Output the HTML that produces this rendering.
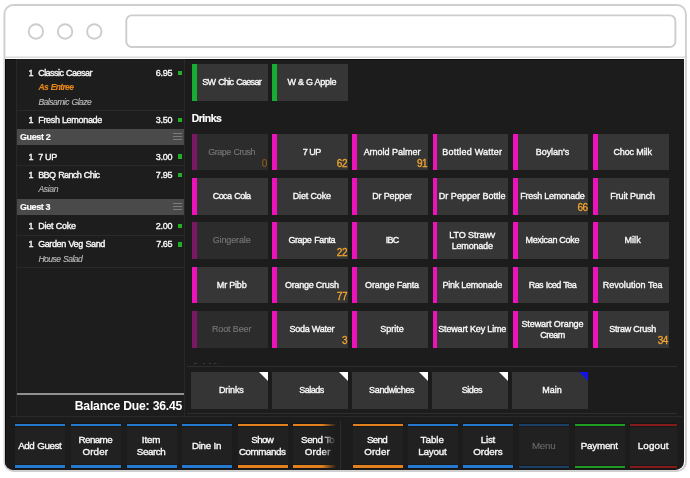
<!DOCTYPE html><html lang="en"><head><meta charset="utf-8"><title>POS Order Screen</title><style>
html,body{margin:0;padding:0;}
body{width:690px;height:478px;background:#fff;position:relative;overflow:hidden;font-family:"Liberation Sans",sans-serif;}
.abs,.abs *{position:absolute;box-sizing:border-box;}
#app{left:5.1px;top:58.5px;width:679.1px;height:411.9px;background:#1c1c1c;border-radius:0 0 8.5px 8.5px;overflow:hidden;color:#fff;}
#in{left:-5.1px;top:-58.5px;width:690px;height:478px;will-change:transform;}
.t{white-space:nowrap;line-height:12px;height:12px;font-size:9px;color:#f8f8f8;-webkit-text-stroke:0.36px #f8f8f8;}
.c{text-align:center;}
.r{text-align:right;}
#order{left:16px;top:59px;width:168.5px;height:357.5px;background:#1d1d1d;border:1px solid #282828;border-top:none;}
.sep{left:17px;width:166.5px;height:1px;background:#292929;}
.gh{left:16.5px;width:167.5px;height:16.2px;background:#4a4a4a;}
.gh b{left:3.4px;top:2.2px;font-size:9px;line-height:12px;white-space:nowrap;color:#fff;-webkit-text-stroke:0.15px #fff;}
.gh i{left:156.6px;width:9px;height:1.2px;background:#7c7c7c;}
.sq{width:4.6px;height:4.6px;background:#22b022;left:177.7px;}
.mod{font-style:italic;color:#b8b8b8;font-size:8.6px;-webkit-text-stroke:0.15px #b8b8b8;}
.btn{background:#363636;width:75.7px;height:36.5px;}
.btn.dis{background:#2c2c2c;}
.btn u{left:0;top:0;width:4.9px;height:100%;background:#ee12bb;text-decoration:none;}
.btn.dis u{background:#7a1866;}
.btn.g u{background:#18ac34;}
.btn .lb{left:3.2px;width:72.9px;text-align:center;font-size:9px;line-height:11px;color:#f8f8f8;white-space:nowrap;-webkit-text-stroke:0.36px #f8f8f8;}
.btn.dis .lb{color:#757575;-webkit-text-stroke:0.15px #757575;}
.btn .n{right:0.9px;bottom:1.4px;font-size:10px;line-height:10px;color:#f2a52e;letter-spacing:-0.5px;-webkit-text-stroke:0.3px #f2a52e;}
.btn.dis .n{color:#8a5a18;-webkit-text-stroke:0.2px #8a5a18;}
.cat{background:#353535;width:76.4px;height:36.9px;top:371.7px;overflow:hidden;}
.cat .lb{left:1.8px;width:100%;text-align:center;top:12.6px;font-size:9px;line-height:12px;color:#f8f8f8;white-space:nowrap;-webkit-text-stroke:0.36px #f8f8f8;}
.cat s{right:0;top:0;width:0;height:0;border-left:9px solid transparent;border-top:9px solid #fff;text-decoration:none;}
.cat.bl s{border-top-color:#1414e0;}
.bb{top:424px;height:44px;width:50px;background:#212121;color:#2579cf;}
.bb p{margin:0;left:0;width:100%;height:2.5px;background:currentColor;box-shadow:0 0 1.5px #000;}
.bb p.t1{top:0;height:2.4px;}
.bb p.t2{bottom:0;height:2.7px;}
.bb .lb{left:-0.5px;width:100%;text-align:center;font-size:9.8px;line-height:11.3px;color:#f8f8f8;white-space:nowrap;-webkit-text-stroke:0.36px #f8f8f8;}
.bb.o{color:#e2801e;}
.bb.gr{color:#1f9c22;}
.bb.rd{color:#841b1b;}
.bb.dk{color:#1b3f66;}
.bb.thin p.t1,.bb.thin p.t2{height:1.8px;}
.bb.gr p.t1,.bb.gr p.t2{height:2.3px;}
.bb.dk .lb{color:#6a6a6a;-webkit-text-stroke:0.1px #6a6a6a;}
</style></head><body>
<svg class="abs" style="position:absolute;left:0;top:0" width="690" height="478" viewBox="0 0 690 478"><rect x="4.4" y="5" width="681.5" height="466" rx="9" ry="9" fill="#fff" stroke="#cfcfcf" stroke-width="1.9"/><line x1="5" y1="57.2" x2="685" y2="57.2" stroke="#dadada" stroke-width="1.6"/><circle cx="35.9" cy="31.5" r="7.2" fill="#fff" stroke="#cdcdcd" stroke-width="1.9"/><circle cx="65.1" cy="31.5" r="7.2" fill="#fff" stroke="#cdcdcd" stroke-width="1.9"/><circle cx="94.3" cy="31.5" r="7.2" fill="#fff" stroke="#cdcdcd" stroke-width="1.9"/><rect x="126.3" y="15.4" width="549.1" height="31.6" rx="5.5" ry="5.5" fill="#fff" stroke="#cdcdcd" stroke-width="1.9"/></svg>
<div class="abs" style="position:absolute;left:0;top:0;width:690px;height:478px">
<div id="app"><div id="in">
<div style="left:5px;top:58px;width:11px;height:420px;background:#1a1a1a"></div>
<div style="left:5px;top:58px;width:1.3px;height:420px;background:#080808"></div>
<div style="left:5px;top:58.5px;width:680px;height:1.5px;background:#101010"></div>
<div id="order"></div>
<div class="t c" style="left:26px;width:10px;top:66.9px">1</div>
<div class="t" style="left:38.2px;top:66.9px;letter-spacing:-0.55px;word-spacing:0.83px">Classic Caesar</div>
<div class="t r" style="left:130px;width:42.4px;top:66.9px;letter-spacing:-0.28px;margin-left:-0.28px">6.95</div>
<div class="sq" style="top:70.6px"></div>
<div class="t mod" style="left:38.4px;top:81.0px;letter-spacing:-0.64px;word-spacing:0.97px;font-size:8.5px;color:#e8871a;font-weight:bold;-webkit-text-stroke:0.1px #e8871a;">As Entree</div>
<div class="t mod" style="left:38.4px;top:96.0px;letter-spacing:-0.54px;word-spacing:0.81px;">Balsamic Glaze</div>
<div class="sep" style="top:109.5px"></div>
<div class="t c" style="left:26px;width:10px;top:114.0px">1</div>
<div class="t" style="left:38.2px;top:114.0px;letter-spacing:-0.30px">Fresh Lemonade</div>
<div class="t r" style="left:130px;width:42.4px;top:114.0px;letter-spacing:-0.28px;margin-left:-0.28px">3.50</div>
<div class="sq" style="top:117.7px"></div>
<div class="gh" style="top:128.9px"><b style="letter-spacing:-0.34px">Guest 2</b><i style="top:4.1px"></i><i style="top:7.2px"></i><i style="top:10.3px"></i></div>
<div class="t c" style="left:26px;width:10px;top:150.7px">1</div>
<div class="t" style="left:38.2px;top:150.7px;letter-spacing:-0.34px">7 UP</div>
<div class="t r" style="left:130px;width:42.4px;top:150.7px;letter-spacing:-0.28px;margin-left:-0.28px">3.00</div>
<div class="sq" style="top:154.4px"></div>
<div class="sep" style="top:165.2px"></div>
<div class="t c" style="left:26px;width:10px;top:168.8px">1</div>
<div class="t" style="left:38.2px;top:168.8px;letter-spacing:-0.62px;word-spacing:0.93px">BBQ Ranch Chic</div>
<div class="t r" style="left:130px;width:42.4px;top:168.8px;letter-spacing:-0.28px;margin-left:-0.28px">7.95</div>
<div class="sq" style="top:172.5px"></div>
<div class="t mod" style="left:38.4px;top:183.4px;letter-spacing:-0.35px;">Asian</div>
<div class="gh" style="top:198.9px"><b style="letter-spacing:-0.42px">Guest 3</b><i style="top:4.1px"></i><i style="top:7.2px"></i><i style="top:10.3px"></i></div>
<div class="t c" style="left:26px;width:10px;top:220.0px">1</div>
<div class="t" style="left:38.2px;top:220.0px;letter-spacing:-0.21px">Diet Coke</div>
<div class="t r" style="left:130px;width:42.4px;top:220.0px;letter-spacing:-0.28px;margin-left:-0.28px">2.00</div>
<div class="sq" style="top:223.7px"></div>
<div class="sep" style="top:234.5px"></div>
<div class="t c" style="left:26px;width:10px;top:238.4px">1</div>
<div class="t" style="left:38.2px;top:238.4px;letter-spacing:-0.41px;word-spacing:0.62px">Garden Veg Sand</div>
<div class="t r" style="left:130px;width:42.4px;top:238.4px;letter-spacing:-0.44px;margin-left:-0.44px">7.65</div>
<div class="sq" style="top:242.1px"></div>
<div class="t mod" style="left:38.4px;top:253.0px;letter-spacing:-0.57px;word-spacing:0.85px;">House Salad</div>
<div class="sep" style="top:266.5px"></div>
<div style="left:16.5px;top:392.8px;width:167.5px;height:1.9px;background:#909090"></div>
<div class="r" style="left:40px;width:142.3px;top:398.8px;font-size:12.2px;line-height:15px;font-weight:bold;letter-spacing:-0.21px;margin-left:-0.21px;color:#fff;white-space:nowrap">Balance Due: 36.45</div>
<div class="btn g" style="left:192.0px;top:64.4px"><u></u><div class="lb" style="top:12.9px"><span style="position:static;display:block;letter-spacing:-0.71px;word-spacing:1.07px">SW Chic Caesar</span></div></div>
<div class="btn g" style="left:272.2px;top:64.4px"><u></u><div class="lb" style="top:12.9px"><span style="position:static;display:block;letter-spacing:-0.26px">W &amp; G Apple</span></div></div>
<div style="left:191.7px;top:110.6px;font-size:10.4px;line-height:15px;font-weight:bold;letter-spacing:-0.43px;color:#fff;white-space:nowrap;-webkit-text-stroke:0.2px #fff">Drinks</div>
<div class="btn dis" style="left:192.0px;top:133.8px"><u></u><div class="lb" style="top:12.9px"><span style="position:static;display:block;letter-spacing:-0.51px;word-spacing:0.76px">Grape Crush</span></div><div class="n">0</div></div>
<div class="btn " style="left:272.2px;top:133.8px"><u></u><div class="lb" style="top:12.9px"><span style="position:static;display:block;letter-spacing:-0.51px">7 UP</span></div><div class="n">62</div></div>
<div class="btn " style="left:352.4px;top:133.8px"><u></u><div class="lb" style="top:12.9px"><span style="position:static;display:block;letter-spacing:-0.02px">Arnold Palmer</span></div><div class="n">91</div></div>
<div class="btn " style="left:432.6px;top:133.8px"><u></u><div class="lb" style="top:12.9px"><span style="position:static;display:block;letter-spacing:0.23px">Bottled Watter</span></div></div>
<div class="btn " style="left:512.8px;top:133.8px"><u></u><div class="lb" style="top:12.9px"><span style="position:static;display:block;letter-spacing:-0.05px">Boylan's</span></div></div>
<div class="btn " style="left:593.0px;top:133.8px"><u></u><div class="lb" style="top:12.9px"><span style="position:static;display:block;letter-spacing:-0.14px">Choc Milk</span></div></div>
<div class="btn " style="left:192.0px;top:178.1px"><u></u><div class="lb" style="top:12.9px"><span style="position:static;display:block;letter-spacing:-0.56px;word-spacing:0.84px">Coca Cola</span></div></div>
<div class="btn " style="left:272.2px;top:178.1px"><u></u><div class="lb" style="top:12.9px"><span style="position:static;display:block;letter-spacing:-0.14px">Diet Coke</span></div></div>
<div class="btn " style="left:352.4px;top:178.1px"><u></u><div class="lb" style="top:12.9px"><span style="position:static;display:block;letter-spacing:-0.15px">Dr Pepper</span></div></div>
<div class="btn " style="left:432.6px;top:178.1px"><u></u><div class="lb" style="top:12.9px"><span style="position:static;display:block;letter-spacing:0.02px">Dr Pepper Bottle</span></div></div>
<div class="btn " style="left:512.8px;top:178.1px"><u></u><div class="lb" style="top:12.9px"><span style="position:static;display:block;letter-spacing:-0.27px">Fresh Lemonade</span></div><div class="n">66</div></div>
<div class="btn " style="left:593.0px;top:178.1px"><u></u><div class="lb" style="top:12.9px"><span style="position:static;display:block;letter-spacing:-0.13px">Fruit Punch</span></div></div>
<div class="btn dis" style="left:192.0px;top:222.4px"><u></u><div class="lb" style="top:12.9px"><span style="position:static;display:block;letter-spacing:-0.13px">Gingerale</span></div></div>
<div class="btn " style="left:272.2px;top:222.4px"><u></u><div class="lb" style="top:12.9px"><span style="position:static;display:block;letter-spacing:-0.39px;word-spacing:0.59px">Grape Fanta</span></div><div class="n">22</div></div>
<div class="btn " style="left:352.4px;top:222.4px"><u></u><div class="lb" style="top:12.9px"><span style="position:static;display:block;letter-spacing:-0.75px">IBC</span></div></div>
<div class="btn " style="left:432.6px;top:222.4px"><u></u><div class="lb" style="top:7.5px"><span style="position:static;display:block;letter-spacing:-0.05px">LTO Strawv</span><span style="position:static;display:block;letter-spacing:-0.19px">Lemonade</span></div></div>
<div class="btn " style="left:512.8px;top:222.4px"><u></u><div class="lb" style="top:12.9px"><span style="position:static;display:block;letter-spacing:-0.28px">Mexican Coke</span></div></div>
<div class="btn " style="left:593.0px;top:222.4px"><u></u><div class="lb" style="top:12.9px"><span style="position:static;display:block;letter-spacing:0.10px">Milk</span></div></div>
<div class="btn " style="left:192.0px;top:266.8px"><u></u><div class="lb" style="top:12.9px"><span style="position:static;display:block;letter-spacing:-0.20px">Mr Pibb</span></div></div>
<div class="btn " style="left:272.2px;top:266.8px"><u></u><div class="lb" style="top:12.9px"><span style="position:static;display:block;letter-spacing:-0.23px">Orange Crush</span></div><div class="n">77</div></div>
<div class="btn " style="left:352.4px;top:266.8px"><u></u><div class="lb" style="top:12.9px"><span style="position:static;display:block;letter-spacing:-0.14px">Orange Fanta</span></div></div>
<div class="btn " style="left:432.6px;top:266.8px"><u></u><div class="lb" style="top:12.9px"><span style="position:static;display:block;letter-spacing:-0.24px">Pink Lemonade</span></div></div>
<div class="btn " style="left:512.8px;top:266.8px"><u></u><div class="lb" style="top:12.9px"><span style="position:static;display:block;letter-spacing:-0.55px;word-spacing:0.82px">Ras Iced Tea</span></div></div>
<div class="btn " style="left:593.0px;top:266.8px"><u></u><div class="lb" style="top:12.9px"><span style="position:static;display:block;letter-spacing:0.03px">Revolution Tea</span></div></div>
<div class="btn dis" style="left:192.0px;top:311.1px"><u></u><div class="lb" style="top:12.9px"><span style="position:static;display:block;letter-spacing:-0.14px">Root Beer</span></div></div>
<div class="btn " style="left:272.2px;top:311.1px"><u></u><div class="lb" style="top:12.9px"><span style="position:static;display:block;letter-spacing:-0.23px">Soda Water</span></div><div class="n">3</div></div>
<div class="btn " style="left:352.4px;top:311.1px"><u></u><div class="lb" style="top:12.9px"><span style="position:static;display:block;letter-spacing:-0.02px">Sprite</span></div></div>
<div class="btn " style="left:432.6px;top:311.1px"><u></u><div class="lb" style="top:12.9px"><span style="position:static;display:block;letter-spacing:-0.16px">Stewart Key Lime</span></div></div>
<div class="btn " style="left:512.8px;top:311.1px"><u></u><div class="lb" style="top:7.5px"><span style="position:static;display:block;letter-spacing:-0.07px">Stewart Orange</span><span style="position:static;display:block;letter-spacing:-0.53px">Cream</span></div></div>
<div class="btn " style="left:593.0px;top:311.1px"><u></u><div class="lb" style="top:12.9px"><span style="position:static;display:block;letter-spacing:-0.26px">Straw Crush</span></div><div class="n">34</div></div>
<div style="left:191.7px;top:360.5px;width:60px;height:3px;overflow:hidden"><div style="left:0;top:0;font-size:10.4px;line-height:13px;font-weight:bold;color:#444;white-space:nowrap;letter-spacing:-0.3px">Add Items</div></div>
<div style="left:187px;top:366.4px;width:490px;height:1px;background:#2e2e2e"></div>
<div style="left:187px;top:412.8px;width:490px;height:1px;background:#2e2e2e"></div>
<div class="cat" style="left:191.3px"><div class="lb" style="letter-spacing:-0.12px">Drinks</div><s></s></div>
<div class="cat" style="left:271.5px"><div class="lb" style="letter-spacing:-0.53px">Salads</div><s></s></div>
<div class="cat" style="left:351.7px"><div class="lb" style="letter-spacing:-0.34px">Sandwiches</div><s></s></div>
<div class="cat" style="left:431.9px"><div class="lb" style="letter-spacing:-0.48px">Sides</div><s></s></div>
<div class="cat bl" style="left:512.1px"><div class="lb" style="letter-spacing:-0.01px">Main</div><s></s></div>
<div style="left:10px;top:420px;width:328px;height:52px;overflow:hidden"><div style="left:-10px;top:-420px;width:690px;height:478px">
<div class="bb " style="left:15.3px;width:50px"><p class="t1"></p><p class="t2"></p><div class="lb" style="top:16.0px"><span style="position:static;display:block;letter-spacing:-0.40px;word-spacing:0.60px">Add Guest</span></div></div>
<div class="bb " style="left:70.8px;width:50px"><p class="t1"></p><p class="t2"></p><div class="lb" style="top:10.3px"><span style="position:static;display:block;letter-spacing:-0.59px">Rename</span><span style="position:static;display:block;letter-spacing:0.14px">Order</span></div></div>
<div class="bb " style="left:126.5px;width:50px"><p class="t1"></p><p class="t2"></p><div class="lb" style="top:10.3px"><span style="position:static;display:block;letter-spacing:-0.19px">Item</span><span style="position:static;display:block;letter-spacing:-0.45px">Search</span></div></div>
<div class="bb " style="left:182px;width:50px"><p class="t1"></p><p class="t2"></p><div class="lb" style="top:16.0px"><span style="position:static;display:block;letter-spacing:-0.26px">Dine In</span></div></div>
<div class="bb o" style="left:237.7px;width:50px"><p class="t1"></p><p class="t2"></p><div class="lb" style="top:10.3px"><span style="position:static;display:block;letter-spacing:-0.71px">Show</span><span style="position:static;display:block;letter-spacing:-0.46px">Commands</span></div></div>
<div class="bb o" style="left:293.2px;width:50px"><p class="t1"></p><p class="t2"></p><div class="lb" style="top:10.3px"><span style="position:static;display:block;letter-spacing:-0.35px">Send To</span><span style="position:static;display:block;letter-spacing:0.14px">Order</span></div></div>
</div><div style="left:312px;top:0;width:16px;height:52px;background:linear-gradient(to right,rgba(28,28,28,0),rgba(28,28,28,1) 90%)"></div></div>
<div style="left:10px;top:416.2px;width:672px;height:1px;background:#292929"></div>
<div style="left:340.3px;top:421px;width:1px;height:49px;background:#2c2c2c"></div>
<div class="bb o" style="left:352.5px;width:50px"><p class="t1"></p><p class="t2"></p><div class="lb" style="top:10.3px"><span style="position:static;display:block;letter-spacing:-0.75px">Send</span><span style="position:static;display:block;letter-spacing:0.14px">Order</span></div></div>
<div class="bb " style="left:407.8px;width:50px"><p class="t1"></p><p class="t2"></p><div class="lb" style="top:10.3px"><span style="position:static;display:block;letter-spacing:-0.01px">Table</span><span style="position:static;display:block;letter-spacing:-0.20px">Layout</span></div></div>
<div class="bb " style="left:463.4px;width:50px"><p class="t1"></p><p class="t2"></p><div class="lb" style="top:10.3px"><span style="position:static;display:block;letter-spacing:-0.22px">List</span><span style="position:static;display:block;letter-spacing:-0.09px">Orders</span></div></div>
<div class="bb dk thin" style="left:519.2px;width:50px"><p class="t1"></p><p class="t2"></p><div class="lb" style="top:16.0px"><span style="position:static;display:block;letter-spacing:-0.24px">Menu</span></div></div>
<div class="bb gr thin" style="left:574.8px;width:50px"><p class="t1"></p><p class="t2"></p><div class="lb" style="top:16.0px"><span style="position:static;display:block;letter-spacing:-0.23px">Payment</span></div></div>
<div class="bb rd thin" style="left:630.4px;width:46.7px"><p class="t1"></p><p class="t2"></p><div class="lb" style="top:16.0px"><span style="position:static;display:block;letter-spacing:0.19px">Logout</span></div></div>
</div></div>
</div>
</body></html>
